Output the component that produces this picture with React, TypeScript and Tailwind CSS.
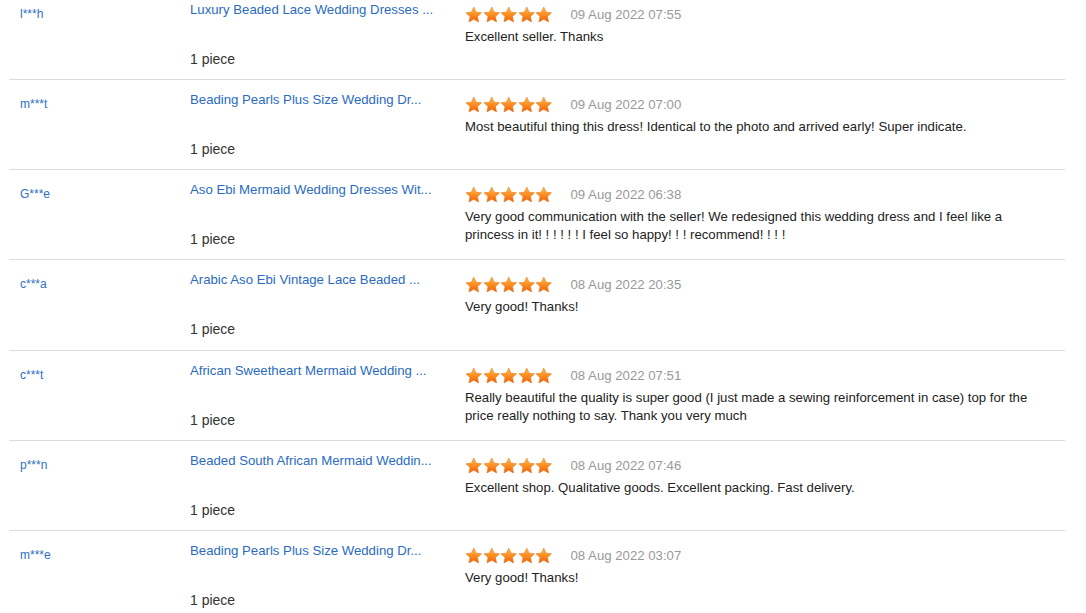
import React from 'react';

interface Review {
  buyer: string;
  title: string;
  date: string;
  text: string;
}

const reviews: Review[] = [
  { buyer: 'l***h', title: 'Luxury Beaded Lace Wedding Dresses ...', date: '09 Aug 2022 07:55', text: 'Excellent seller. Thanks' },
  { buyer: 'm***t', title: 'Beading Pearls Plus Size Wedding Dr...', date: '09 Aug 2022 07:00', text: 'Most beautiful thing this dress! Identical to the photo and arrived early! Super indicate.' },
  { buyer: 'G***e', title: 'Aso Ebi Mermaid Wedding Dresses Wit...', date: '09 Aug 2022 06:38', text: 'Very good communication with the seller! We redesigned this wedding dress and I feel like a princess in it! ! ! ! ! ! I feel so happy! ! ! recommend! ! ! !' },
  { buyer: 'c***a', title: 'Arabic Aso Ebi Vintage Lace Beaded ...', date: '08 Aug 2022 20:35', text: 'Very good! Thanks!' },
  { buyer: 'c***t', title: 'African Sweetheart Mermaid Wedding ...', date: '08 Aug 2022 07:51', text: 'Really beautiful the quality is super good (I just made a sewing reinforcement in case) top for the price really nothing to say. Thank you very much' },
  { buyer: 'p***n', title: 'Beaded South African Mermaid Weddin...', date: '08 Aug 2022 07:46', text: 'Excellent shop. Qualitative goods. Excellent packing. Fast delivery.' },
  { buyer: 'm***e', title: 'Beading Pearls Plus Size Wedding Dr...', date: '08 Aug 2022 03:07', text: 'Very good! Thanks!' },
];

function Star() {
  return (
    <svg width="17.5" height="18" viewBox="0 0 24 24">
      <defs>
        <linearGradient id="starGrad" x1="0" y1="0" x2="0" y2="1">
          <stop offset="0%" stopColor="#ffc04a" />
          <stop offset="55%" stopColor="#fb8a1e" />
          <stop offset="100%" stopColor="#ee5f0e" />
        </linearGradient>
      </defs>
      <path
        d="M12 1.2l3.2 6.9 7.4.9-5.5 5.1 1.5 7.4L12 17.8l-6.6 3.7 1.5-7.4L1.4 9l7.4-.9z"
        fill="url(#starGrad)"
        stroke="#e8740f"
        strokeWidth="0.8"
        strokeLinejoin="round"
      />
    </svg>
  );
}

export default function App() {
  return (
    <div className="w-[1086px] h-[613px] overflow-hidden bg-white" style={{ fontFamily: '"Liberation Sans", Arial, sans-serif' }}>
      <div className="-mt-[10px] ml-[9px] w-[1056px]">
        {reviews.map((r, i) => (
          <div key={i} className={`flex border-b border-[#dcdcdc] ${i === 3 ? 'h-[91px]' : 'h-[90px]'}`}>
            <div className="w-[181px] pl-[11px] pt-[16px] text-[12px] leading-[16px] text-[#2f6fbf]">{r.buyer}</div>
            <div className="w-[275px] pt-[12px]">
              <div className="w-[246px] truncate text-[13.2px] leading-[16px] text-[#2a6bbf]">{r.title}</div>
              <div className="mt-[32px] text-[14px] leading-[18px] text-[#333]">1 piece</div>
            </div>
            <div className="pt-[16px]">
              <div className="flex h-[18px] items-center">
                <div className="flex">
                  <Star />
                  <Star />
                  <Star />
                  <Star />
                  <Star />
                </div>
                <span className="ml-[18px] text-[13.2px] text-[#999]">{r.date}</span>
              </div>
              <p className="mt-[4px] w-[580px] text-[13.2px] leading-[18px] text-[#222]">{r.text}</p>
            </div>
          </div>
        ))}
      </div>
    </div>
  );
}
